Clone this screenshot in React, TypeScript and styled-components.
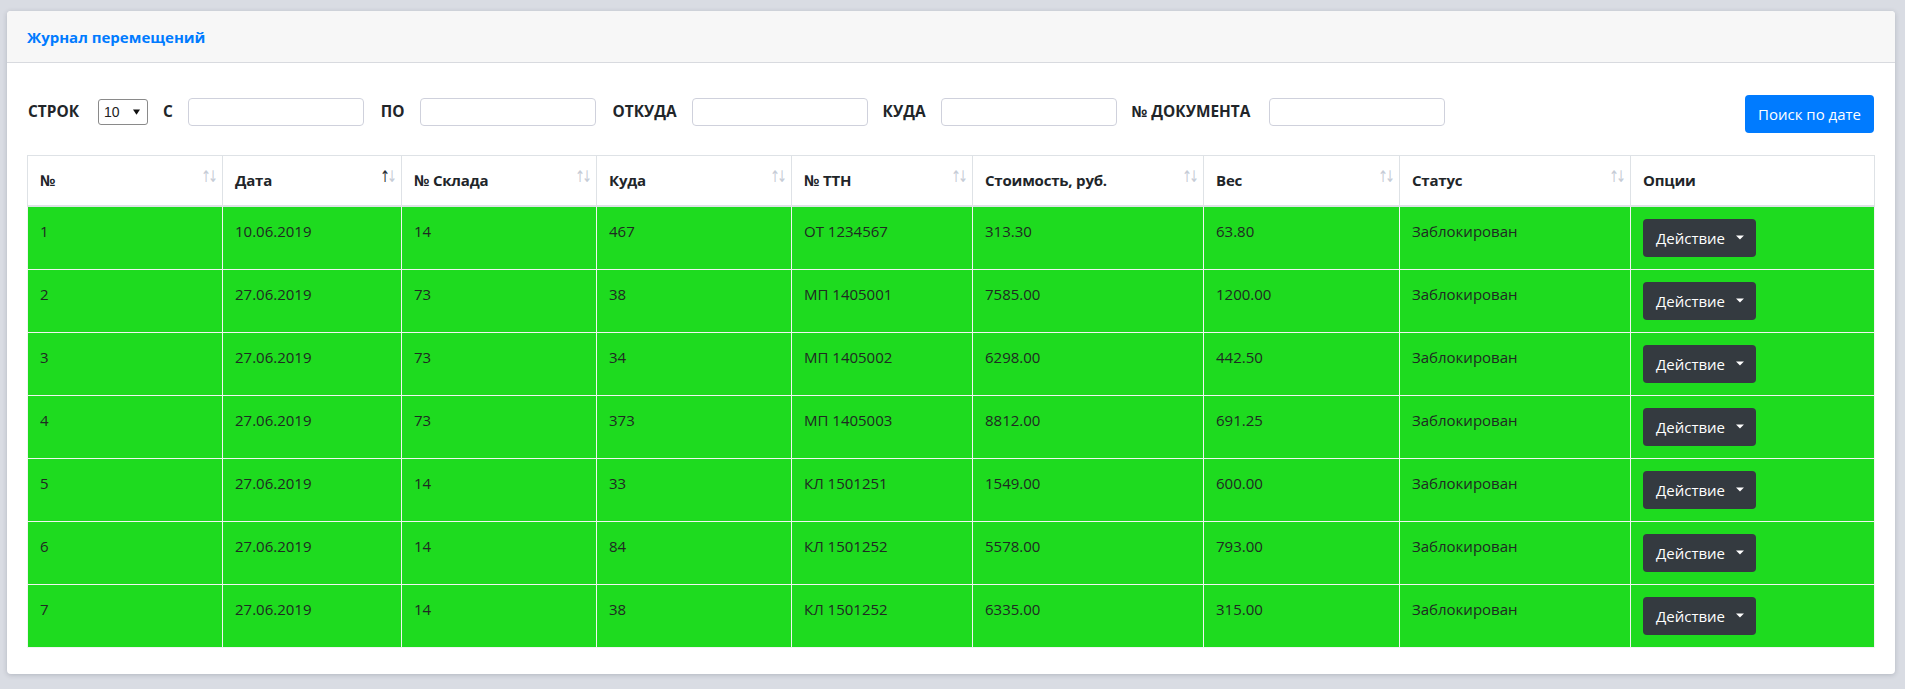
import React from "react";
import styled, { createGlobalStyle } from "styled-components";

type Row = {
  id: number;
  date: string;
  store: string;
  to: string;
  ttn: string;
  cost: string;
  weight: string;
  status: string;
};

const rows: Row[] = [
  { id: 1, date: "10.06.2019", store: "14", to: "467", ttn: "ОТ 1234567", cost: "313.30", weight: "63.80", status: "Заблокирован" },
  { id: 2, date: "27.06.2019", store: "73", to: "38", ttn: "МП 1405001", cost: "7585.00", weight: "1200.00", status: "Заблокирован" },
  { id: 3, date: "27.06.2019", store: "73", to: "34", ttn: "МП 1405002", cost: "6298.00", weight: "442.50", status: "Заблокирован" },
  { id: 4, date: "27.06.2019", store: "73", to: "373", ttn: "МП 1405003", cost: "8812.00", weight: "691.25", status: "Заблокирован" },
  { id: 5, date: "27.06.2019", store: "14", to: "33", ttn: "КЛ 1501251", cost: "1549.00", weight: "600.00", status: "Заблокирован" },
  { id: 6, date: "27.06.2019", store: "14", to: "84", ttn: "КЛ 1501252", cost: "5578.00", weight: "793.00", status: "Заблокирован" },
  { id: 7, date: "27.06.2019", store: "14", to: "38", ttn: "КЛ 1501252", cost: "6335.00", weight: "315.00", status: "Заблокирован" },
];

// ширины колонок сняты со скриншота
const columns: { title: string; width: number; sort?: "none" | "asc" }[] = [
  { title: "№", width: 195, sort: "none" },
  { title: "Дата", width: 179, sort: "asc" },
  { title: "№ Склада", width: 195, sort: "none" },
  { title: "Куда", width: 195, sort: "none" },
  { title: "№ ТТН", width: 181, sort: "none" },
  { title: "Стоимость, руб.", width: 231, sort: "none" },
  { title: "Вес", width: 196, sort: "none" },
  { title: "Статус", width: 231, sort: "none" },
  { title: "Опции", width: 244 },
];

const filters = [
  { label: "С", gapLeft: 14, inner: 15 },
  { label: "ПО", gapLeft: 16, inner: 15 },
  { label: "ОТКУДА", gapLeft: 16, inner: 15 },
  { label: "КУДА", gapLeft: 14, inner: 15 },
  { label: "№ ДОКУМЕНТА", gapLeft: 14, inner: 19 },
];

const App: React.FC = () => {
  return (
    <>
      <GlobalStyle />
      <Page>
        <Card>
          <CardHeader>Журнал перемещений</CardHeader>
          <CardBody>
            <FilterBar>
              <FilterGroup $gap={0} $inner={15}>
                <FilterLabel>СТРОК</FilterLabel>
                <SelectBox>
                  <span>10</span>
                  <Caret viewBox="0 0 8 6" width={7} height={6}>
                    <path d="M0 0h8L4 6z" fill="#111" />
                  </Caret>
                </SelectBox>
              </FilterGroup>
              {filters.map(f => (
                <FilterGroup key={f.label} $gap={f.gapLeft} $inner={f.inner}>
                  <FilterLabel>{f.label}</FilterLabel>
                  <TextInput />
                </FilterGroup>
              ))}
              <SearchButton>Поиск по дате</SearchButton>
            </FilterBar>

            <Table>
              <colgroup>
                {columns.map(c => (
                  <col key={c.title} style={{ width: c.width }} />
                ))}
              </colgroup>
              <thead>
                <tr>
                  {columns.map(c => (
                    <HeadCell key={c.title}>
                      {c.title}
                      {c.sort && (
                        <SortIcon>
                          <SortArrow $active={c.sort === "asc"}>↑</SortArrow>
                          <SortArrow>↓</SortArrow>
                        </SortIcon>
                      )}
                    </HeadCell>
                  ))}
                </tr>
              </thead>
              <tbody>
                {rows.map(r => (
                  <BodyRow key={r.id}>
                    <Cell>{r.id}</Cell>
                    <Cell>{r.date}</Cell>
                    <Cell>{r.store}</Cell>
                    <Cell>{r.to}</Cell>
                    <Cell>{r.ttn}</Cell>
                    <Cell>{r.cost}</Cell>
                    <Cell>{r.weight}</Cell>
                    <Cell>{r.status}</Cell>
                    <Cell>
                      <ActionButton>
                        Действие
                        <svg viewBox="0 0 10 5" width={10} height={5}>
                          <path d="M0 0h10L5 5z" fill="#fff" />
                        </svg>
                      </ActionButton>
                    </Cell>
                  </BodyRow>
                ))}
              </tbody>
            </Table>
          </CardBody>
        </Card>
      </Page>
    </>
  );
};

const GlobalStyle = createGlobalStyle`
  html, body {
    margin: 0;
    padding: 0;
    background: #d9dce3;
  }
  body {
    font-family: "Open Sans", "Noto Sans", sans-serif;
    color: #212529;
  }
  * {
    box-sizing: border-box;
  }
`;

const Page = styled.div`
  padding: 11px 10px 15px 7px;
  min-height: 689px;
`;

const Card = styled.div`
  background: #fff;
  border-radius: 4px;
  box-shadow: 0 1px 5px rgba(40, 50, 70, 0.22);
  overflow: hidden;
`;

const CardHeader = styled.div`
  height: 52px;
  padding: 0 20px;
  display: flex;
  align-items: center;
  background: #f7f7f7;
  border-bottom: 1px solid #d8dadf;
  color: #007bff;
  font-weight: 700;
  font-size: 15px;
`;

const CardBody = styled.div`
  padding: 32px 21px 26px 20px;
`;

const FilterBar = styled.div`
  display: flex;
  align-items: flex-start;
  height: 38px;
  margin-bottom: 22px;
`;

const FilterGroup = styled.div<{ $gap: number; $inner: number }>`
  display: flex;
  align-items: center;
  gap: ${({ $inner }) => $inner}px;
  height: 28px;
  margin-top: 3px;
  margin-left: ${({ $gap }) => $gap}px;
`;

const FilterLabel = styled.span`
  font-size: 15.4px;
  font-weight: 700;
  line-height: 28px;
  color: #212529;
  padding-left: 1px;
`;

const SelectBox = styled.div`
  margin-left: 4px;
  width: 50px;
  height: 26px;
  border: 1px solid #8a8a8a;
  border-radius: 3px;
  display: flex;
  align-items: center;
  justify-content: space-between;
  padding: 0 7px 0 5px;
  font-size: 14px;
  color: #222;
  font-family: "Liberation Sans", Arial, sans-serif;
`;

const Caret = styled.svg`
  display: block;
`;

const TextInput = styled.input`
  width: 176px;
  height: 28px;
  border: 1px solid #cfd1dc;
  border-radius: 4px;
  background: #fff;
  outline: none;
`;

const SearchButton = styled.button`
  margin-left: auto;
  height: 38px;
  padding: 0 13px;
  border: none;
  border-radius: 4px;
  background: #007bff;
  color: #fff;
  font-family: "Open Sans", "Noto Sans", sans-serif;
  font-size: 15px;
`;

const Table = styled.table`
  width: 100%;
  table-layout: fixed;
  border-collapse: collapse;
  border: 1px solid #dee2e6;
`;

const HeadCell = styled.th`
  position: relative;
  height: 50px;
  padding: 12px;
  text-align: left;
  font-size: 15px;
  font-weight: 700;
  color: #212529;
  border: 1px solid #dee2e6;
  border-bottom: 2px solid #dee2e6;
  vertical-align: middle;
  letter-spacing: -0.2px;
`;

const SortIcon = styled.span`
  position: absolute;
  right: 8px;
  top: 13px;
  display: flex;
  font-size: 16px;
  font-weight: 400;
  line-height: 1;
  font-family: "DejaVu Sans", sans-serif;
`;

const SortArrow = styled.span<{ $active?: boolean }>`
  color: ${({ $active }) => ($active ? "#2a2f36" : "#c6ccd6")};
  transform: scaleX(0.75);
  display: inline-block;
  width: 7px;
  text-align: center;
`;

const BodyRow = styled.tr`
  background: #1edb1f;
`;

const Cell = styled.td`
  height: 63px;
  padding: 12px;
  vertical-align: top;
  font-size: 15px;
  line-height: 24px;
  color: #1f2a22;
  border: 1px solid #f1f5f1;
`;

const ActionButton = styled.button`
  display: inline-flex;
  align-items: center;
  gap: 9px;
  height: 38px;
  width: 113px;
  padding: 0 12px 0 13px;
  border: none;
  border-radius: 4px;
  background: #343a40;
  color: #fff;
  font-family: "Open Sans", "Noto Sans", sans-serif;
  font-size: 15px;
  svg {
    display: block;
    margin-left: 2px;
  }
`;

export default App;
